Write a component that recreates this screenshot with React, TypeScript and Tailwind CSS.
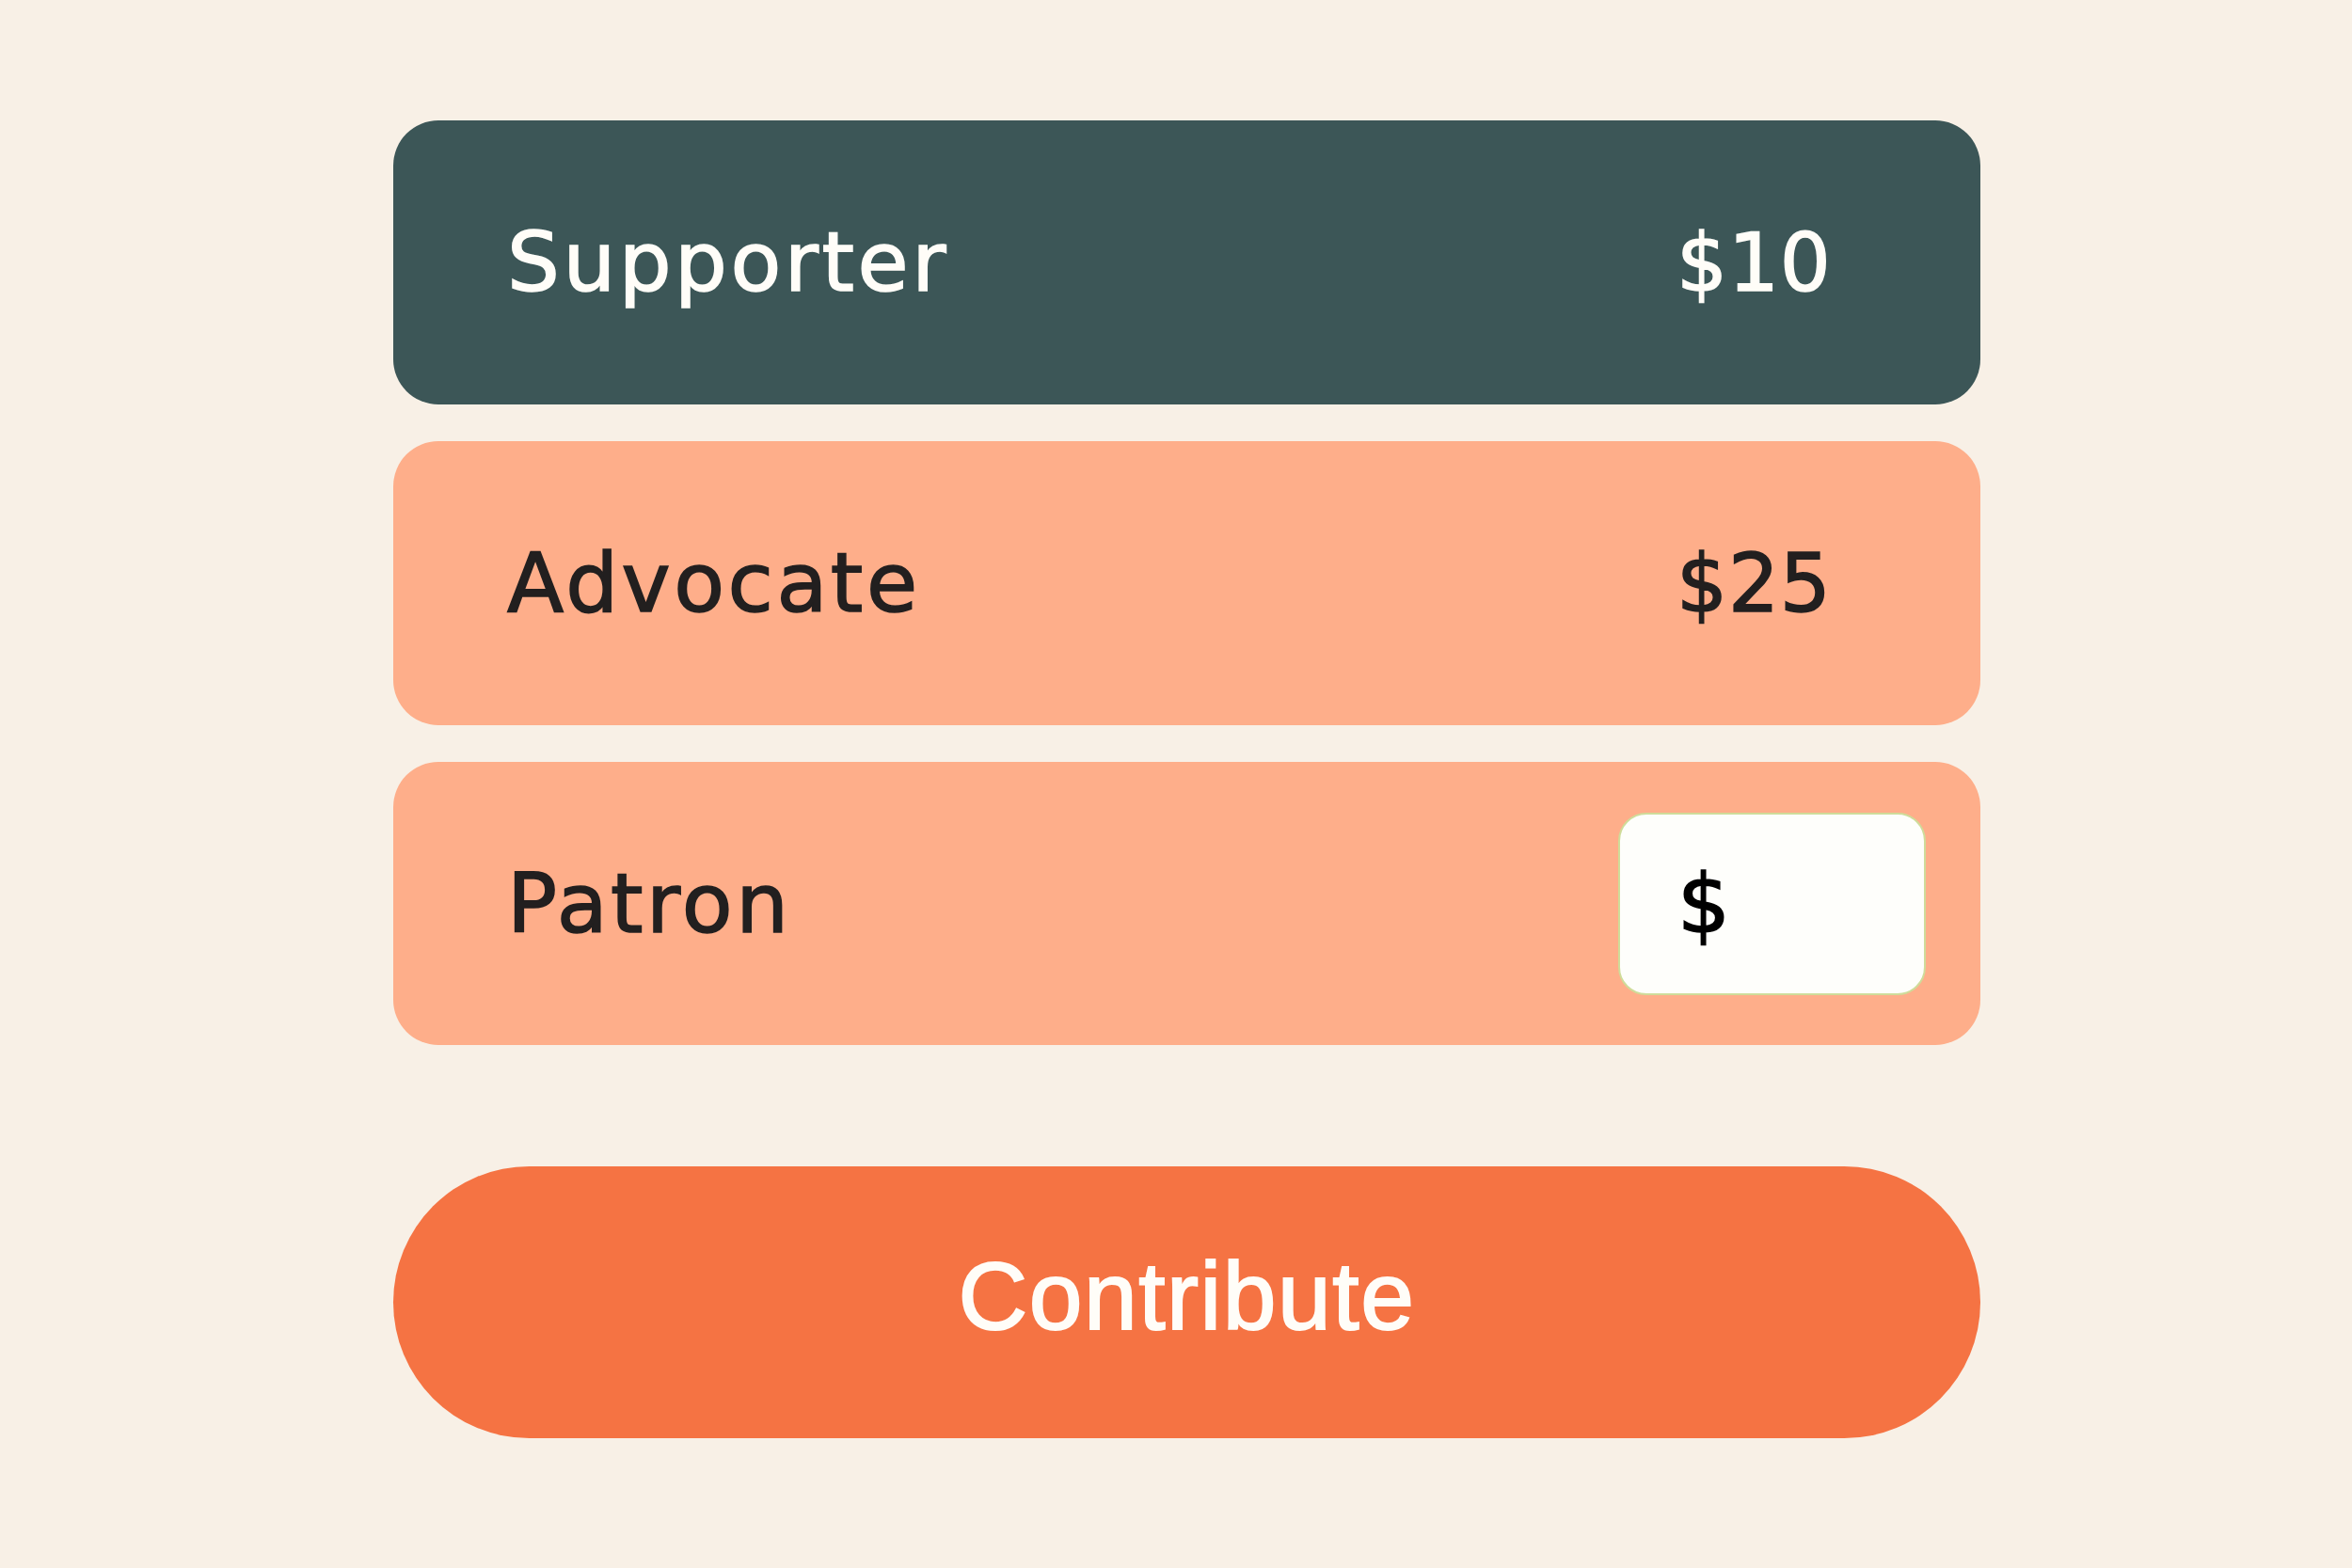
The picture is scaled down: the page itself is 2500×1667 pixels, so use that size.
const tiers = [
  { name: "Supporter", price: "$10", active: true },
  { name: "Advocate", price: "$25", active: false },
];

function TierCard({ name, price, active }: { name: string; price: string; active: boolean }) {
  return (
    <div
      className={
        active
          ? "flex h-[302px] items-center rounded-[48px] bg-[#3c5657] pl-[121px] pr-[58px] text-[#fffdf8]"
          : "flex h-[302px] items-center rounded-[48px] bg-[#feae8a] pl-[121px] pr-[58px] text-[#221f1f]"
      }
    >
      <span className="flex-1 text-[88px] leading-none tracking-[0.04em]">{name}</span>
      <span className="w-[327px] pl-[62px] text-[85px] leading-none tracking-[0.01em]">{price}</span>
    </div>
  );
}

export default function App() {
  return (
    <div className="min-h-[1667px] w-full bg-[#f8f0e6] font-['DejaVu_Sans',sans-serif] [-webkit-text-stroke:1.6px_currentColor]">
      <div className="flex w-[2105px] flex-col pl-[418px] pt-[128px]">
        <div className="flex flex-col gap-[39px]">
          {tiers.map((t) => (
            <TierCard key={t.name} {...t} />
          ))}

          {/* Custom amount */}
          <div className="flex h-[301px] items-center rounded-[48px] bg-[#feae8a] pl-[121px] pr-[58px] text-[#221f1f]">
            <span className="flex-1 text-[88px] leading-none tracking-[0.04em]">Patron</span>
            <label className="flex h-[194px] w-[327px] items-center rounded-[30px] border-2 border-[#cfdc9a] bg-[#fefefb] pl-[61px]">
              <span className="text-[88px] leading-none text-black">$</span>
              <input className="ml-2 w-full bg-transparent text-[86px] leading-none text-black outline-none" />
            </label>
          </div>
        </div>

        <button className="mt-[129px] h-[289px] w-full rounded-full bg-[#f57343] pb-[14px] font-['Liberation_Sans',Arial,sans-serif] text-[102px] leading-none tracking-[0.015em] text-[#fffdf8] [-webkit-text-stroke:2px_currentColor]">
          Contribute
        </button>
      </div>
    </div>
  );
}
